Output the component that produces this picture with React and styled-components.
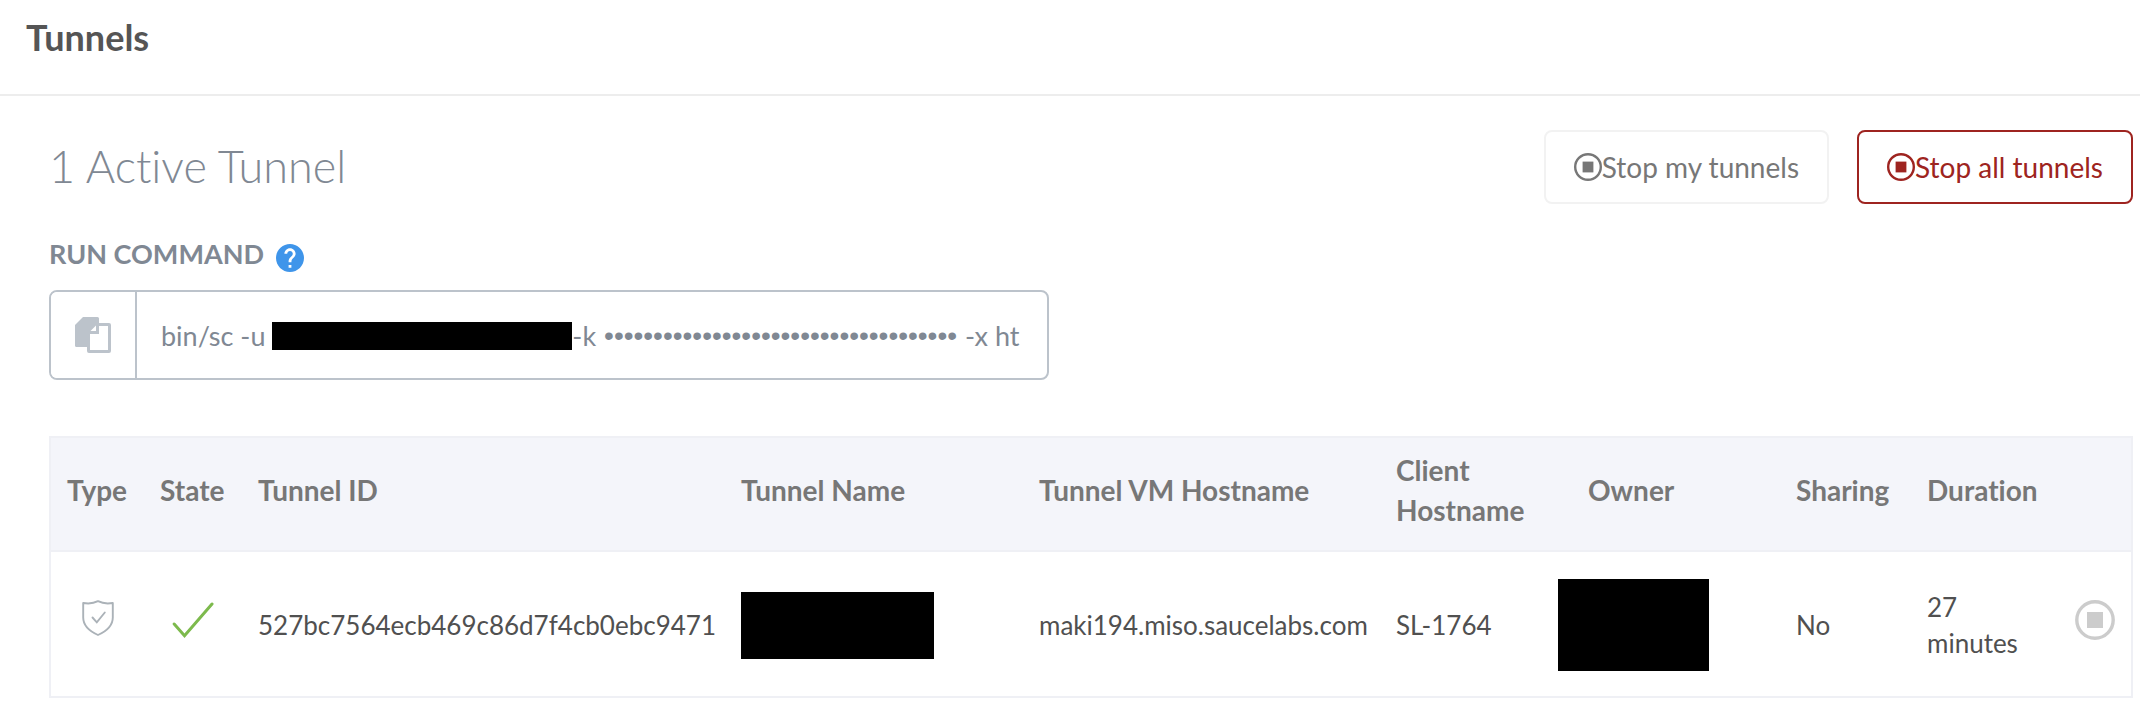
import React from "react";
import styled, { createGlobalStyle } from "styled-components";

const GlobalStyle = createGlobalStyle`
  *, *::before, *::after { box-sizing: border-box; }
  body {
    margin: 0;
    background: #fff;
    color: #505050;
    font-family: Lato, "Liberation Sans", sans-serif;
    font-variant-ligatures: none;
  }
`;

const PageHeader = styled.header`
  padding: 13px 26px 33px;
  border-bottom: 2px solid #ededed;
`;

const PageTitle = styled.h1`
  margin: 0;
  font-size: 36px;
  line-height: 48px;
  font-weight: 700;
  color: #555;
`;

const Content = styled.main`
  padding: 34px 7px 15px 49px;
`;

const TopBar = styled.div`
  display: flex;
  flex-wrap: wrap;
  justify-content: space-between;
  align-items: flex-start;
  gap: 28px;
`;

const Heading = styled.h2`
  margin: 0;
  padding-top: 8px;
  font-size: 45px;
  line-height: 56px;
  font-weight: 300;
  color: #808893;
`;

const Actions = styled.div`
  display: flex;
  gap: 28px;
`;

const ActionButton = styled.button`
  display: flex;
  align-items: center;
  height: 74px;
  padding: 0 28px;
  border: 2px solid ${(p) => (p.$danger ? "#9e2420" : "#f2f2f2")};
  border-radius: 8px;
  background: #fff;
  color: ${(p) => (p.$danger ? "#9e2420" : "#777")};
  font: inherit;
  font-size: 28px;
  line-height: 40px;
  cursor: pointer;
`;

const LabelRow = styled.div`
  display: flex;
  align-items: flex-end;
  gap: 12px;
  margin-top: 32px;
`;

const SectionLabel = styled.h3`
  margin: 0;
  font-size: 27px;
  line-height: 36px;
  font-weight: 700;
  color: #808893;
`;

const HelpButton = styled.button`
  display: block;
  padding: 0;
  border: 0;
  background: none;
  cursor: pointer;
  svg { display: block; }
`;

const CommandBox = styled.div`
  display: flex;
  width: 100%;
  max-width: 1000px;
  height: 90px;
  margin-top: 18px;
  border: 2px solid #bcc3cb;
  border-radius: 8px;
  overflow: hidden;
`;

const CopyButton = styled.button`
  display: flex;
  flex: none;
  align-items: center;
  justify-content: center;
  width: 86px;
  padding: 0;
  border: 0;
  border-right: 2px solid #bcc3cb;
  background: #fff;
  cursor: pointer;
`;

const Command = styled.div`
  display: flex;
  flex: 1;
  align-items: center;
  min-width: 0;
  padding: 2px 20px 0 24px;
  overflow: hidden;
  white-space: pre;
  font-size: 27px;
  line-height: 40px;
  color: #808893;
`;

const SecretDots = styled.span`
  margin: 0 8px;
  font-family: "Liberation Sans", sans-serif;
  font-size: 28px;
`;

const Redacted = styled.span`
  display: block;
  flex: none;
  width: ${(p) => p.$w}px;
  height: ${(p) => p.$h}px;
  background: #000;
`;

const TableScroll = styled.div`
  margin-top: 56px;
  overflow-x: auto;
`;

const Table = styled.table`
  width: 100%;
  min-width: 2000px;
  table-layout: fixed;
  border: 2px solid #eff0f5;
  border-spacing: 0;
`;

const Col = styled.col`
  width: ${(p) => p.$w}px;
`;

const HeadCell = styled.th`
  padding: 12px 12px 20px ${(p) => (p.$indent ? 46 : 16)}px;
  border-bottom: 2px solid #eff0f5;
  background: #f4f5fa;
  color: #777;
  font-size: 28px;
  line-height: 40px;
  font-weight: 700;
  text-align: left;
`;

const Cell = styled.td`
  height: 144px;
  padding: 2px 12px 0 16px;
  color: #505050;
  font-size: 26px;
  line-height: 36px;
`;

const IconCell = styled(Cell)`
  padding: 0 0 8px;
  svg { display: block; margin: 0 auto; }
`;

const StopButton = styled.button`
  display: block;
  margin: 0 auto;
  padding: 0;
  border: 0;
  background: none;
  color: #ccc;
  cursor: pointer;
`;

const StopIcon = () => (
  <svg width="28" height="28" viewBox="0 0 28 28" aria-hidden="true">
    <circle cx="14" cy="14" r="12.8" fill="none" stroke="currentColor" strokeWidth="2.4" />
    <rect x="8.6" y="8.6" width="10.8" height="10.8" fill="currentColor" />
  </svg>
);

const StopLargeIcon = () => (
  <svg width="40" height="40" viewBox="0 0 40 40" aria-hidden="true">
    <circle cx="20" cy="20" r="18.2" fill="none" stroke="currentColor" strokeWidth="3.4" />
    <rect x="12" y="12" width="16" height="16" fill="currentColor" />
  </svg>
);

const HelpIcon = () => (
  <svg width="28" height="28" viewBox="2 2 20 20" aria-hidden="true">
    <path
      fill="#3f95ea"
      d="M12 2C6.48 2 2 6.48 2 12s4.48 10 10 10 10-4.48 10-10S17.52 2 12 2zm1 17h-2v-2h2v2zm2.07-7.75l-.9.92C13.45 12.9 13 13.5 13 15h-2v-.5c0-1.1.45-2.1 1.17-2.83l1.24-1.26c.37-.36.59-.86.59-1.41 0-1.1-.9-2-2-2s-2 .9-2 2H8c0-2.21 1.79-4 4-4s4 1.79 4 4c0 .88-.36 1.68-.93 2.25z"
    />
  </svg>
);

const CopyIcon = () => (
  <svg width="36" height="36" viewBox="0 0 36 36" aria-hidden="true">
    <path fill="#bcc3cb" d="M8 0h14.5A1.5 1.5 0 0 1 24 1.5V30H1.5A1.5 1.5 0 0 1 0 28.500V8z" />
    <rect x="13.500" y="7.500" width="21" height="27" rx="0.500" fill="#fff" stroke="#bcc3cb" strokeWidth="3" />
    <path fill="#bcc3cb" d="M12 6h12v11H12z" />
    <path fill="#fff" d="M21 8.500V14h-5.500z" />
  </svg>
);

const ShieldIcon = () => (
  <svg width="32" height="40" viewBox="0 0 32 40" fill="none" stroke="#abb2b8" aria-hidden="true">
    <path strokeWidth="1.900" strokeLinejoin="round" d="M16 1.200C12.500 3 7 4 1.200 3v14.500C1.200 25 6 30.500 16 35c10-4.500 14.800-10 14.800-17.500V3C25 4 19.500 3 16 1.200z" />
    <path strokeWidth="1.900" strokeLinecap="round" d="M10.500 17.500l4.300 4.800 8-9.800" />
  </svg>
);

const CheckIcon = () => (
  <svg width="42" height="40" viewBox="0 0 42 40" fill="none" stroke="#7dba4d" aria-hidden="true">
    <path strokeWidth="3" strokeLinecap="round" d="M2.200 24l10.300 11.700L40 4" />
  </svg>
);

export default function App() {
  return (
    <>
      <GlobalStyle />
      <PageHeader>
        <PageTitle>Tunnels</PageTitle>
      </PageHeader>
      <Content>
        <TopBar>
          <Heading>1 Active Tunnel</Heading>
          <Actions>
            <ActionButton type="button">
              <StopIcon />
              Stop my tunnels
            </ActionButton>
            <ActionButton type="button" $danger>
              <StopIcon />
              Stop all tunnels
            </ActionButton>
          </Actions>
        </TopBar>
        <LabelRow>
          <SectionLabel>RUN COMMAND</SectionLabel>
          <HelpButton type="button" aria-label="Help">
            <HelpIcon />
          </HelpButton>
        </LabelRow>
        <CommandBox>
          <CopyButton type="button" aria-label="Copy command">
            <CopyIcon />
          </CopyButton>
          <Command>
            <span>bin/sc -u </span>
            <Redacted $w={300} $h={28} />
            <span>-k</span>
            <SecretDots>{"•".repeat(36)}</SecretDots>
            <span>-x ht</span>
          </Command>
        </CommandBox>
        <TableScroll>
          <Table>
            <colgroup>
              <Col $w={93} />
              <Col $w={98} />
              <Col $w={483} />
              <Col $w={298} />
              <Col $w={357} />
              <Col $w={162} />
              <Col $w={238} />
              <Col $w={131} />
              <Col $w={147} />
              <Col $w={73} />
            </colgroup>
            <thead>
              <tr>
                <HeadCell>Type</HeadCell>
                <HeadCell>State</HeadCell>
                <HeadCell>Tunnel ID</HeadCell>
                <HeadCell>Tunnel Name</HeadCell>
                <HeadCell>Tunnel VM Hostname</HeadCell>
                <HeadCell>Client Hostname</HeadCell>
                <HeadCell $indent>Owner</HeadCell>
                <HeadCell>Sharing</HeadCell>
                <HeadCell>Duration</HeadCell>
                <HeadCell aria-label="Actions" />
              </tr>
            </thead>
            <tbody>
              <tr>
                <IconCell><ShieldIcon /></IconCell>
                <IconCell><CheckIcon /></IconCell>
                <Cell>527bc7564ecb469c86d7f4cb0ebc9471</Cell>
                <Cell><Redacted $w={193} $h={67} /></Cell>
                <Cell>maki194.miso.saucelabs.com</Cell>
                <Cell>SL-1764</Cell>
                <Cell><Redacted $w={151} $h={92} /></Cell>
                <Cell>No</Cell>
                <Cell>27 minutes</Cell>
                <IconCell>
                  <StopButton type="button" aria-label="Stop tunnel">
                    <StopLargeIcon />
                  </StopButton>
                </IconCell>
              </tr>
            </tbody>
          </Table>
        </TableScroll>
      </Content>
    </>
  );
}
